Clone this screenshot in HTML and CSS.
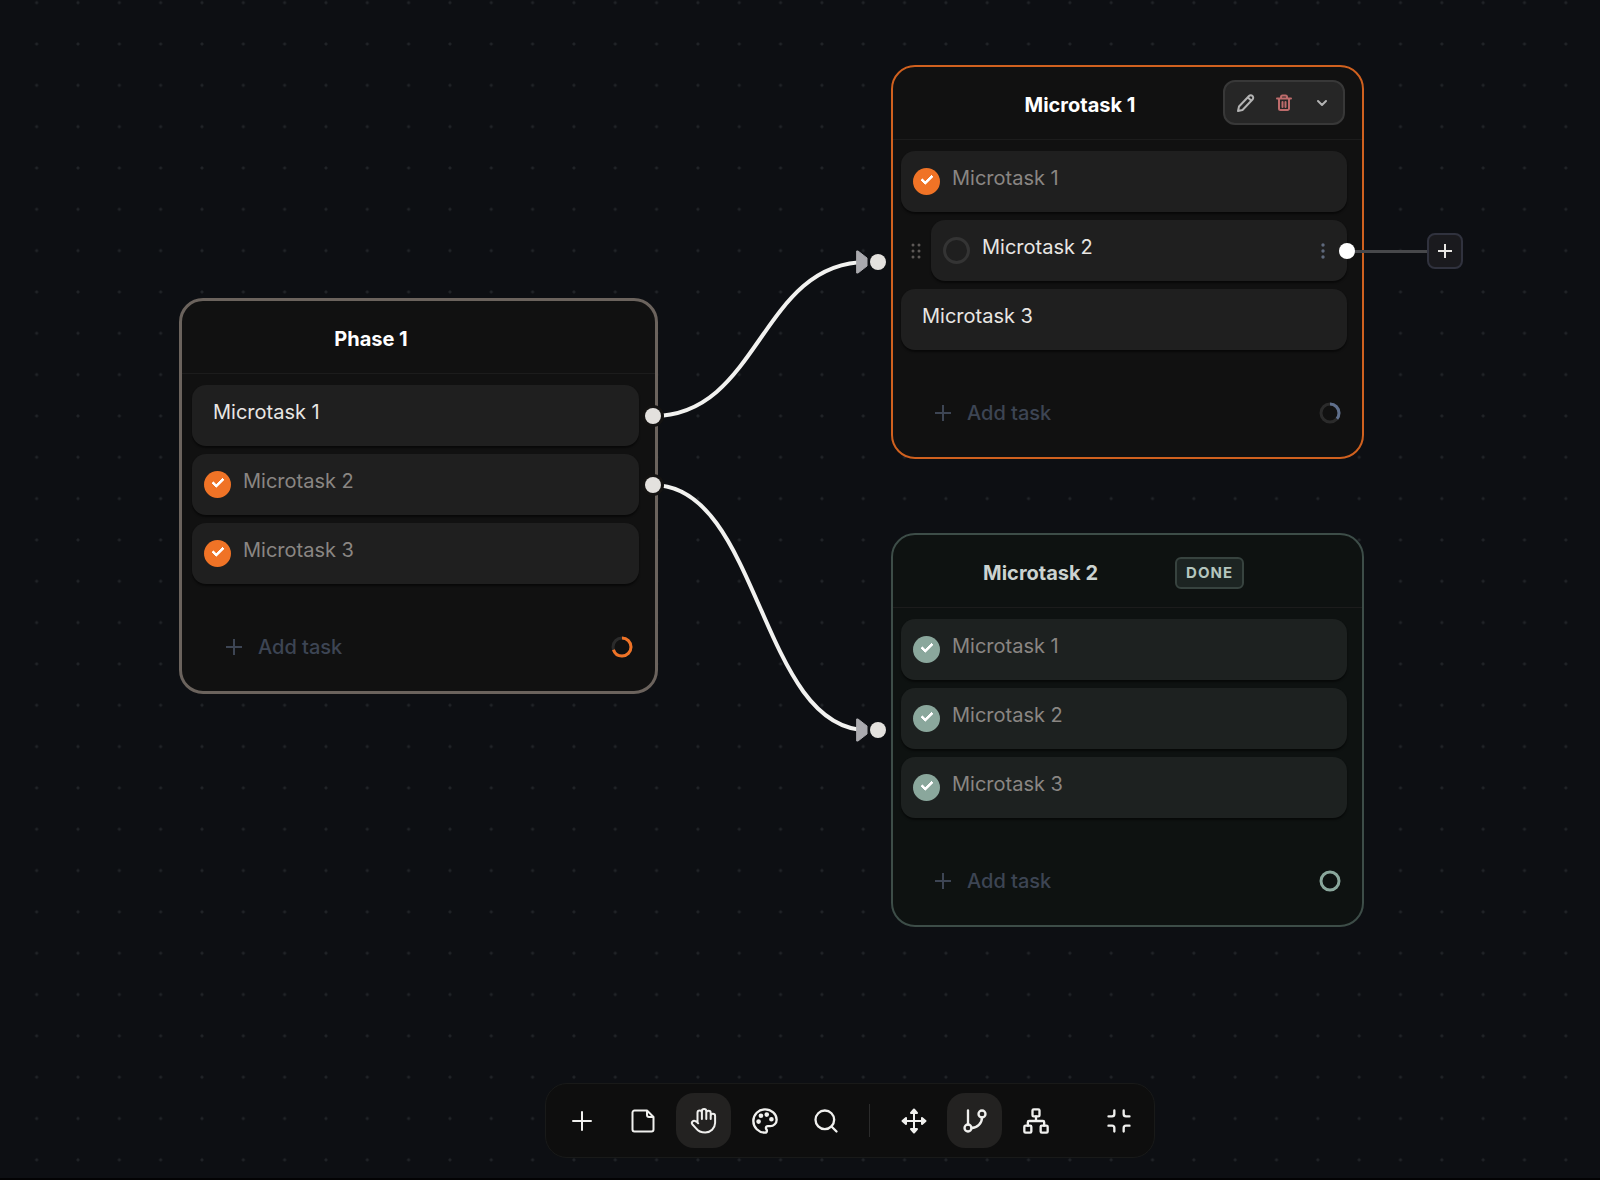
FILE: index.html
```
<!DOCTYPE html>
<html lang="en">
<head>
    <meta charset="UTF-8">
    <meta name="viewport" content="width=device-width, initial-scale=1.0">
    <title>Microtask board</title>
    <link rel="stylesheet" href="styles.css">
</head>
<body>
    <main class="board">
        <!-- Connections -->
        <svg class="edges" aria-hidden="true">
            <path class="edge" d="M653 416C760 416 760 262 867 262" />
            <path class="edge" d="M653 485C760 485 760 730 867 730" />
            <path class="arrow" d="M857 251h1l9 7v8l-9 7h-1z" />
            <path class="arrow" d="M857 719h1l9 7v8l-9 7h-1z" />
        </svg>

        <!-- Phase 1 -->
        <section class="card phase">
            <header class="card-header">
                <h2>Phase 1</h2>
            </header>
            <div class="task-list">
                <div class="task plain">
                    <span class="task-name">Microtask 1</span>
                    <i class="port out"></i>
                </div>
                <div class="task">
                    <input type="checkbox" id="p-2" checked>
                    <label class="task-name" for="p-2">Microtask 2</label>
                    <i class="port out"></i>
                </div>
                <div class="task">
                    <input type="checkbox" id="p-3" checked>
                    <label class="task-name" for="p-3">Microtask 3</label>
                </div>
            </div>
            <footer class="card-footer">
                <button class="add-task">
                    <svg width="16" height="16" viewBox="0 0 16 16"><path d="M8 0v16M0 8h16" /></svg>
                    Add task
                </button>
                <svg class="ring" width="22" height="22" viewBox="0 0 22 22">
                    <circle class="track" cx="11" cy="11" r="9" />
                    <circle class="value" cx="11" cy="11" r="9" pathLength="100" stroke-dasharray="70 100" />
                </svg>
            </footer>
        </section>

        <!-- Microtask 1 -->
        <section class="card active">
            <i class="port in"></i>
            <header class="card-header">
                <h2>Microtask 1</h2>
                <div class="card-actions">
                    <button aria-label="Edit">
                        <svg width="18" height="18" viewBox="0 0 18 18"><path d="M1 17l1-4.500L12 2a2 2 0 0 1 3.500 3.500L5.500 16zM11 3.500l3 3" /></svg>
                    </button>
                    <button class="delete" aria-label="Delete">
                        <svg width="18" height="18" viewBox="0 0 18 18"><path d="M2 4.500h14M6 4V3a1.500 1.500 0 0 1 1.500-1.500h3A1.500 1.500 0 0 1 12 3v1M4 5v9.500A1.500 1.500 0 0 0 5.500 16h7a1.500 1.500 0 0 0 1.500-1.500V5M7.500 8v5M10.500 8v5" /></svg>
                    </button>
                    <button aria-label="Collapse">
                        <svg width="18" height="18" viewBox="0 0 18 18"><path d="M5 7l4 4 4-4" /></svg>
                    </button>
                </div>
            </header>
            <div class="task-list">
                <div class="task">
                    <input type="checkbox" id="a-1" checked>
                    <label class="task-name" for="a-1">Microtask 1</label>
                </div>
                <div class="task hovered">
                    <svg class="grip" width="10" height="18" viewBox="0 0 10 18">
                        <circle cx="2" cy="3" r="1.500" /><circle cx="8" cy="3" r="1.500" />
                        <circle cx="2" cy="9" r="1.500" /><circle cx="8" cy="9" r="1.500" />
                        <circle cx="2" cy="15" r="1.500" /><circle cx="8" cy="15" r="1.500" />
                    </svg>
                    <input type="checkbox" id="a-2">
                    <label class="task-name" for="a-2">Microtask 2</label>
                    <button class="task-menu" aria-label="Task menu">
                        <svg width="4" height="18" viewBox="0 0 4 18"><circle cx="2" cy="3" r="1.700" /><circle cx="2" cy="9" r="1.700" /><circle cx="2" cy="15" r="1.700" /></svg>
                    </button>
                    <div class="branch">
                        <i class="branch-dot"></i>
                        <button class="branch-add" aria-label="Add card">
                            <svg width="14" height="14" viewBox="0 0 14 14"><path d="M7 0v14M0 7h14" /></svg>
                        </button>
                    </div>
                </div>
                <div class="task plain">
                    <span class="task-name">Microtask 3</span>
                </div>
            </div>
            <footer class="card-footer">
                <button class="add-task">
                    <svg width="16" height="16" viewBox="0 0 16 16"><path d="M8 0v16M0 8h16" /></svg>
                    Add task
                </button>
                <svg class="ring" width="22" height="22" viewBox="0 0 22 22">
                    <circle class="track" cx="11" cy="11" r="9" />
                    <circle class="value" cx="11" cy="11" r="9" pathLength="100" stroke-dasharray="36 100" />
                </svg>
            </footer>
        </section>

        <!-- Microtask 2 -->
        <section class="card done">
            <i class="port in"></i>
            <header class="card-header">
                <h2>Microtask 2</h2>
                <span class="badge">DONE</span>
            </header>
            <div class="task-list">
                <div class="task">
                    <input type="checkbox" id="d-1" checked>
                    <label class="task-name" for="d-1">Microtask 1</label>
                </div>
                <div class="task">
                    <input type="checkbox" id="d-2" checked>
                    <label class="task-name" for="d-2">Microtask 2</label>
                </div>
                <div class="task">
                    <input type="checkbox" id="d-3" checked>
                    <label class="task-name" for="d-3">Microtask 3</label>
                </div>
            </div>
            <footer class="card-footer">
                <button class="add-task">
                    <svg width="16" height="16" viewBox="0 0 16 16"><path d="M8 0v16M0 8h16" /></svg>
                    Add task
                </button>
                <svg class="ring" width="22" height="22" viewBox="0 0 22 22">
                    <circle class="value" cx="11" cy="11" r="9" />
                </svg>
            </footer>
        </section>
    </main>

    <!-- Toolbar -->
    <nav class="dock">
        <div class="toolbar">
            <button aria-label="Add">
                <svg viewBox="0 0 28 28"><path d="M14 5v18M5 14h18" /></svg>
            </button>
            <button aria-label="Note">
                <svg viewBox="0 0 28 28"><path d="M18 3.500H5.500a2 2 0 0 0-2 2v17a2 2 0 0 0 2 2h17a2 2 0 0 0 2-2V10zM18 3.500V8a2 2 0 0 0 2 2h4.500" /></svg>
            </button>
            <button class="selected" aria-label="Pan">
                <svg viewBox="0 0 28 28"><path d="M7.500 15V5.800a2.200 2.200 0 0 1 4.400 0V12M11.900 12V4.200a2.200 2.200 0 0 1 4.400 0V12M16.300 12V6a2.200 2.200 0 0 1 4.400 0v6M20.700 9a2.200 2.200 0 0 1 4.400 0v7A9.800 9.800 0 0 1 15.300 25.500c-4 0-7-1-9-3.800L2.500 17.500a2.200 2.200 0 0 1 3-3.200c1.200.4 2 1.200 2.700 2" /></svg>
            </button>
            <button aria-label="Colors">
                <svg viewBox="0 0 24 24"><path d="M12 2C6.500 2 2 6.500 2 12s4.500 10 10 10c.93 0 1.650-.75 1.650-1.690 0-.44-.18-.83-.44-1.120-.29-.29-.44-.65-.44-1.130a1.640 1.640 0 0 1 1.670-1.670h2c3.050 0 5.550-2.500 5.550-5.550C21.970 6.010 17.460 2 12 2z" /><circle class="dot" cx="13.500" cy="6.500" r="1" /><circle class="dot" cx="17.500" cy="10.500" r="1" /><circle class="dot" cx="8.500" cy="7.500" r="1" /><circle class="dot" cx="6.500" cy="12.500" r="1" /></svg>
            </button>
            <button aria-label="Search">
                <svg viewBox="0 0 24 24"><circle cx="11" cy="11" r="8" /><path d="M21 21l-4.300-4.300" /></svg>
            </button>
            <span class="divider"></span>
            <button aria-label="Move">
                <svg viewBox="0 0 28 28"><path d="M14 3v22M3 14h22" /><path class="dot" d="M14 2.500l3 3.500h-6zM14 25.500l3-3.500h-6zM2.500 14L6 11v6zM25.500 14L22 11v6z" /></svg>
            </button>
            <button class="selected" aria-label="Branch">
                <svg viewBox="0 0 24 24"><path d="M6 3v12" /><circle cx="18" cy="6" r="3" /><circle cx="6" cy="18" r="3" /><path d="M18 9a9 9 0 0 1-9 9" /></svg>
            </button>
            <button aria-label="Layout">
                <svg viewBox="0 0 24 24"><rect x="16" y="16" width="6" height="6" rx="1" /><rect x="2" y="16" width="6" height="6" rx="1" /><rect x="9" y="2" width="6" height="6" rx="1" /><path d="M5 16v-3a1 1 0 0 1 1-1h12a1 1 0 0 1 1 1v3M12 12V8" /></svg>
            </button>
            <button class="exit" aria-label="Minimize">
                <svg viewBox="0 0 24 24"><path d="M8 3v3a2 2 0 0 1-2 2H3M21 8h-3a2 2 0 0 1-2-2V3M3 16h3a2 2 0 0 1 2 2v3M16 21v-3a2 2 0 0 1 2-2h3" /></svg>
            </button>
        </div>
    </nav>
</body>
</html>
```
FILE: styles.css
```
* {
    box-sizing: border-box;
}

body {
    margin: 0;
    min-height: 100vh;
    display: flex;
    flex-direction: column;
    font-family: 'Inter', 'Liberation Sans', sans-serif;
    font-size: 20px;
    color: #e8e6e3;
    background-color: #0d0f13;
    background-image: radial-gradient(circle at center, #212428 1px, transparent 2px);
    background-size: calc(124px / 3) calc(124px / 3);
    background-position: 16px -18px;
    border-bottom: 2px solid #030304;
}

button {
    font: inherit;
    color: inherit;
    background: none;
    border: none;
    padding: 0;
    cursor: pointer;
}

svg {
    display: block;
    fill: none;
    stroke: currentColor;
    stroke-width: 2;
    stroke-linecap: round;
    stroke-linejoin: round;
}

/* Board */
.board {
    flex: 1;
    position: relative;
    min-height: 1000px;
}

.edges {
    position: absolute;
    inset: 0;
    width: 100%;
    height: 100%;
    overflow: visible;
}

.edge {
    stroke: #f2f2f0;
    stroke-width: 4;
    stroke-linecap: butt;
}

.arrow {
    fill: #a9a9ae;
    stroke: #a9a9ae;
    stroke-width: 1;
}

/* Cards */
.card {
    position: absolute;
    width: 473px;
    background: #111111;
    border: 2px solid #6b635d;
    border-radius: 24px;
}

.phase {
    left: 179px;
    top: 298px;
    width: 479px;
    border-width: 3px;
}

.active {
    left: 891px;
    top: 65px;
    border-color: #d0611f;
}

.done {
    left: 891px;
    top: 533px;
    background: #0e1211;
    border-color: #3d4d48;
}

.card-header {
    display: flex;
    align-items: center;
    height: 73px;
    padding: 4px 112px 0 17px;
    border-bottom: 1px solid #1c1c1c;
}

.card-header h2 {
    flex: 1;
    margin: 0;
    font-size: 20px;
    font-weight: 700;
    text-align: center;
    color: #ffffff;
}

.done .card-header h2 {
    color: #cbd3d0;
}

.badge {
    margin: 0 6px 0 4px;
    padding: 0 9px;
    font-size: 15px;
    line-height: 28px;
    font-weight: 700;
    letter-spacing: 1px;
    color: #b4c6be;
    background: #1c2422;
    border: 2px solid #37433f;
    border-radius: 6px;
}

.card-actions {
    position: absolute;
    top: 13px;
    right: 17px;
    display: flex;
    align-items: center;
    gap: 20px;
    height: 45px;
    padding: 0 12px;
    color: #b3b3b3;
    background: #262626;
    border: 2px solid #383838;
    border-radius: 12px;
}

.card-actions .delete {
    color: #bd6b6b;
}

/* Tasks */
.task-list {
    display: flex;
    flex-direction: column;
    gap: 8px;
    padding: 11px 15px 0 8px;
}

.phase .task-list {
    padding: 11px 16px 0 10px;
}

.task {
    position: relative;
    display: flex;
    align-items: center;
    gap: 12px;
    height: 61px;
    padding: 0 12px;
    background: #1f1f1f;
    border-radius: 14px;
    box-shadow: 0 2px 2px rgba(0, 0, 0, 0.5);
}

.done .task {
    background: #1d2120;
}

.task.plain {
    padding: 0 21px;
}

.task.hovered {
    margin-left: 30px;
}

.task-name {
    padding-bottom: 7px;
}

.task input:checked + .task-name {
    color: #8a8683;
}

.task input {
    appearance: none;
    position: relative;
    width: 27px;
    height: 27px;
    margin: 0;
    border: 3px solid #343434;
    border-radius: 50%;
}

.task input:checked {
    background: #f07326;
    border: none;
}

.done .task input:checked {
    background: #8aa79c;
}

.task input:checked::after {
    content: '';
    position: absolute;
    left: 8px;
    top: 7px;
    width: 9px;
    height: 4px;
    border-left: 3px solid #ffffff;
    border-bottom: 3px solid #ffffff;
    border-radius: 1px;
    transform: rotate(-45deg);
}

.grip {
    position: absolute;
    left: -20px;
    top: 22px;
    fill: #5c5856;
    stroke: none;
}

.task-menu {
    margin-left: auto;
    margin-right: 10px;
    color: #5f697c;
}

.task-menu svg {
    fill: currentColor;
    stroke: none;
}

/* Ports */
.port {
    position: absolute;
    width: 16px;
    height: 16px;
    border-radius: 50%;
    background: #e3e1de;
}

.port.out {
    right: -22px;
    top: 23px;
    box-shadow: 0 0 0 3px #141312;
}

.port.in {
    left: -23px;
    top: calc(50% - 8px);
}

.branch {
    position: absolute;
    left: calc(100% - 8px);
    top: 13px;
    width: 124px;
    height: 36px;
    display: flex;
    align-items: center;
    justify-content: space-between;
    background: linear-gradient(#47484b, #47484b) center / 100% 3px no-repeat;
}

.branch-dot {
    width: 16px;
    height: 16px;
    border-radius: 50%;
    background: #ffffff;
}

.branch-add {
    display: flex;
    align-items: center;
    justify-content: center;
    width: 36px;
    height: 36px;
    background: #1a1a1e;
    border: 2px solid #30323e;
    border-radius: 8px;
}

.branch-add svg {
    stroke-width: 2;
    stroke-linecap: butt;
}

/* Card footer */
.card-footer {
    display: flex;
    align-items: center;
    justify-content: space-between;
    height: 88px;
    margin-top: 19px;
    padding: 0 21px 0 42px;
}

.phase .card-footer {
    padding: 0 22px 0 44px;
}

.add-task {
    display: flex;
    align-items: center;
    gap: 16px;
    font-weight: 500;
    color: #3d4554;
}

.ring {
    stroke-width: 3;
    stroke-linecap: butt;
    transform: rotate(-90deg);
}

.ring .track {
    stroke: #2b2b2b;
}

.phase .ring .value {
    stroke: #f07326;
}

.active .ring .value {
    stroke: #5f6f8c;
}

.done .ring .value {
    stroke: #8aa79c;
}

/* Toolbar */
.dock {
    display: flex;
    justify-content: center;
    padding: 0 0 20px 100px;
}

.toolbar {
    display: flex;
    align-items: center;
    gap: 6px;
    height: 75px;
    padding: 0 8px;
    background: #0e0e0e;
    border: 1px solid #191a19;
    border-radius: 22px;
}

.toolbar button {
    display: flex;
    align-items: center;
    justify-content: center;
    width: 55px;
    height: 55px;
    border-radius: 18px;
    color: #f0f0ee;
}

.toolbar button.selected {
    background: #232221;
}

.toolbar svg {
    width: 28px;
    height: 28px;
}

.toolbar .dot {
    fill: currentColor;
}

.toolbar .divider {
    width: 1px;
    height: 33px;
    margin: 0 10px;
    background: #2b2b2b;
}

.toolbar .exit {
    margin-left: 22px;
}
```
